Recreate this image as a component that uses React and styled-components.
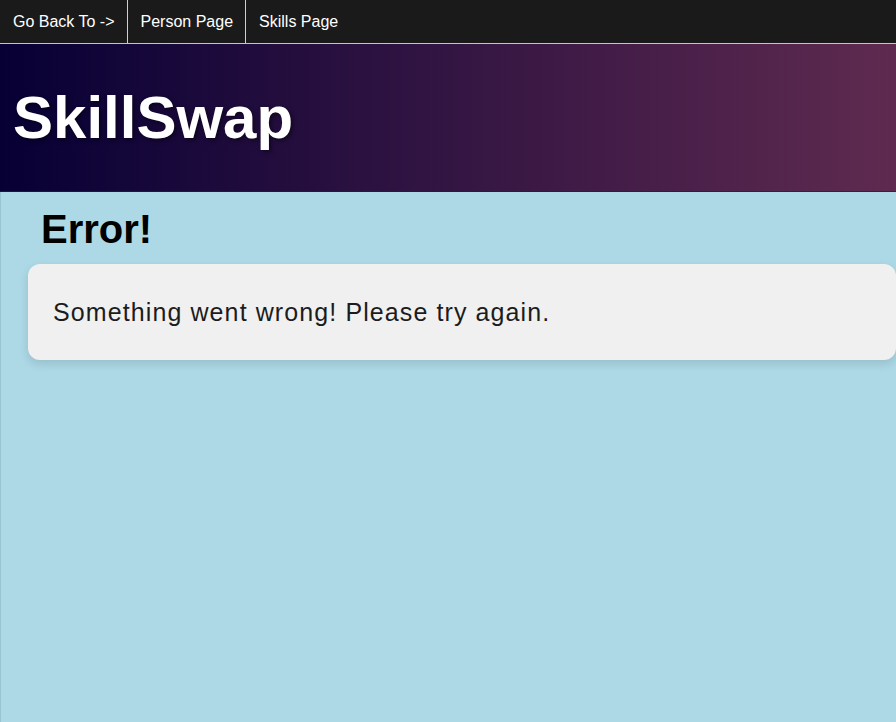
import React from 'react'
import styled, { createGlobalStyle } from 'styled-components'

const GlobalStyle = createGlobalStyle`
  html, body {
    margin: 0;
    padding: 0;
    background-color: #add8e6;
    font-family: "Liberation Sans", Arial, sans-serif;
  }
  #root {
    min-height: 100vh;
  }
`

const Page = styled.div`
  min-height: 100vh;
  display: flex;
  flex-direction: column;
  overflow: hidden;
`
const NavBar = styled.nav`
  height: 43px;
  display: flex;
  align-items: stretch;
  background-color: #1a1a1a;
  border-bottom: 1px solid #c9c3c9;
`
const NavItem = styled.a`
  display: flex;
  align-items: center;
  padding: 0 12px 0 13px;
  color: #ffffff;
  font-size: 16px;
  text-decoration: none;
  border-left: ${props => (props.first ? 'none' : '1px solid #d0d0d0')};
  cursor: pointer;
`
const Header = styled.header`
  background: linear-gradient(to right, #070035, #5f2a50);
  border-bottom: 1px solid rgba(90, 0, 70, 0.7);
  padding: 0 13px;
`
const Title = styled.h1`
  margin: 40px 0;
  font-size: 60px;
  line-height: 67px;
  font-weight: 700;
  color: #ffffff;
  text-shadow: 2px 2px 4px rgba(0, 0, 0, 0.5);
`
const Main = styled.main`
  flex: 1;
  border-left: 1px solid #98c4d4;
  padding: 0 0 0 27px;
`
const Heading = styled.h2`
  margin: 15px 0 12px 13px;
  font-size: 40px;
  line-height: 45px;
  font-weight: 700;
  color: #000000;
`
const Card = styled.div`
  background-color: #f0f0f0;
  border-radius: 12px;
  padding: 34px 24px 34px 25px;
  box-shadow: 0 4px 10px rgba(0, 0, 0, 0.12);
`
const Message = styled.p`
  margin: 0;
  font-size: 25px;
  line-height: 28px;
  color: #1c1c1c;
  letter-spacing: 1.1px;
`

const App = () => {
  return (
    <Page>
      <GlobalStyle />
      <NavBar>
        <NavItem first>Go Back To -&gt;</NavItem>
        <NavItem>Person Page</NavItem>
        <NavItem>Skills Page</NavItem>
      </NavBar>
      <Header>
        <Title>SkillSwap</Title>
      </Header>
      <Main>
        <Heading>Error!</Heading>
        <Card>
          <Message>Something went wrong! Please try again.</Message>
        </Card>
      </Main>
    </Page>
  )
}

export default App
